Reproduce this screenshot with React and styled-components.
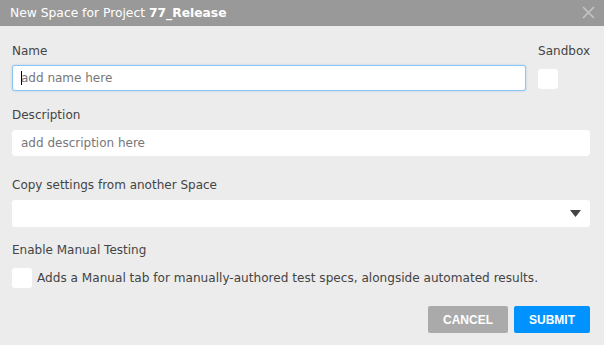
import React, { useState } from "react";
import styled, { createGlobalStyle } from "styled-components";

const GlobalStyle = createGlobalStyle`
  html, body {
    margin: 0;
    padding: 0;
    background: #ececec;
  }
  body {
    font-family: "DejaVu Sans", Verdana, sans-serif;
  }
`;

const Dialog = styled.div`
  width: 604px;
  height: 345px;
  background: #ececec;
  display: flex;
  flex-direction: column;
`;

const TitleBar = styled.div`
  height: 26px;
  background: #999999;
  display: flex;
  align-items: center;
  justify-content: space-between;
  padding: 0 8px 0 10px;
  color: #ffffff;
  font-size: 12.3px;
`;

const Title = styled.div`
  b {
    font-weight: bold;
  }
`;

const CloseButton = styled.button`
  border: none;
  background: none;
  padding: 0;
  width: 14px;
  height: 14px;
  display: flex;
  cursor: pointer;
`;

const Body = styled.form`
  flex: 1;
  padding: 18px 14px 12px 12px;
  display: flex;
  flex-direction: column;
`;

const Label = styled.div`
  font-size: 12px;
  color: #444;
  line-height: 14px;
`;

const TopRow = styled.div`
  display: flex;
  gap: 12px;
`;

const Field = styled.div`
  display: flex;
  flex-direction: column;
  gap: ${(p) => p.gap || 8}px;
  flex: ${(p) => (p.grow ? 1 : "none")};
  margin-bottom: ${(p) => p.mb || 0}px;
`;

const TextInput = styled.input`
  box-sizing: border-box;
  width: 100%;
  height: 26px;
  border: 1px solid ${(p) => (p.focused ? "#8cc4f2" : "#ffffff")};
  box-shadow: ${(p) => (p.focused ? "0 0 2px rgba(100,170,240,0.6)" : "none")};
  border-radius: 3px;
  background: #fff;
  padding: 0 8px;
  font-family: "DejaVu Sans", Verdana, sans-serif;
  font-size: 12px;
  color: #333;
  outline: none;
  &::placeholder {
    color: #777;
  }
`;

const Check = styled.div`
  width: 20px;
  height: 20px;
  background: #fff;
  border-radius: 3px;
  flex: none;
`;

const SelectBox = styled.div`
  height: 27px;
  background: #fff;
  border-radius: 3px;
  display: flex;
  align-items: center;
  justify-content: flex-end;
  padding-right: 9px;
`;

const CheckRow = styled.div`
  display: flex;
  align-items: center;
  gap: 5px;
  font-size: 12.1px;
  color: #444;
`;

const Footer = styled.div`
  margin-top: auto;
  display: flex;
  justify-content: flex-end;
  gap: 6px;
`;

const Button = styled.button`
  height: 27px;
  width: ${(p) => p.w}px;
  border: none;
  border-radius: 2px;
  background: ${(p) => (p.primary ? "#0093ff" : "#aaaaaa")};
  color: #fff;
  font-family: "Liberation Sans", Arial, sans-serif;
  font-weight: bold;
  font-size: 12px;
  cursor: pointer;
`;

const Cursor = styled.span`
  position: absolute;
  left: 9px;
  top: 6px;
  width: 1px;
  height: 14px;
  background: #000;
`;

const InputWrap = styled.div`
  position: relative;
`;

export default function App() {
  const [name, setName] = useState("");
  const [description, setDescription] = useState("");

  return (
    <>
      <GlobalStyle />
      <Dialog>
        <TitleBar>
          <Title>
            New Space for Project <b>77_Release</b>
          </Title>
          <CloseButton type="button" aria-label="close">
            <svg width="13" height="13" viewBox="0 0 13 13">
              <path d="M1 1L12 12M12 1L1 12" stroke="#c4c4c4" strokeWidth="1.6" />
            </svg>
          </CloseButton>
        </TitleBar>
        <Body onSubmit={(e) => e.preventDefault()}>
          <TopRow>
            <Field grow mb={17} gap={7}>
              <Label>Name</Label>
              <InputWrap>
                <TextInput
                  focused
                  value={name}
                  onChange={(e) => setName(e.target.value)}
                  placeholder="add name here"
                />
                {name === "" && <Cursor />}
              </InputWrap>
            </Field>
            <Field gap={11}>
              <Label>Sandbox</Label>
              <Check />
            </Field>
          </TopRow>
          <Field mb={22}>
            <Label>Description</Label>
            <TextInput
              value={description}
              onChange={(e) => setDescription(e.target.value)}
              placeholder="add description here"
            />
          </Field>
          <Field mb={16}>
            <Label>Copy settings from another Space</Label>
            <SelectBox>
              <svg width="11" height="7" viewBox="0 0 11 7">
                <path d="M0 0H11L5.5 7Z" fill="#444" />
              </svg>
            </SelectBox>
          </Field>
          <Field gap={11}>
            <Label>Enable Manual Testing</Label>
            <CheckRow>
              <Check />
              Adds a Manual tab for manually-authored test specs, alongside automated results.
            </CheckRow>
          </Field>
          <Footer>
            <Button type="button" w={80}>CANCEL</Button>
            <Button type="submit" primary w={76}>SUBMIT</Button>
          </Footer>
        </Body>
      </Dialog>
    </>
  );
}
